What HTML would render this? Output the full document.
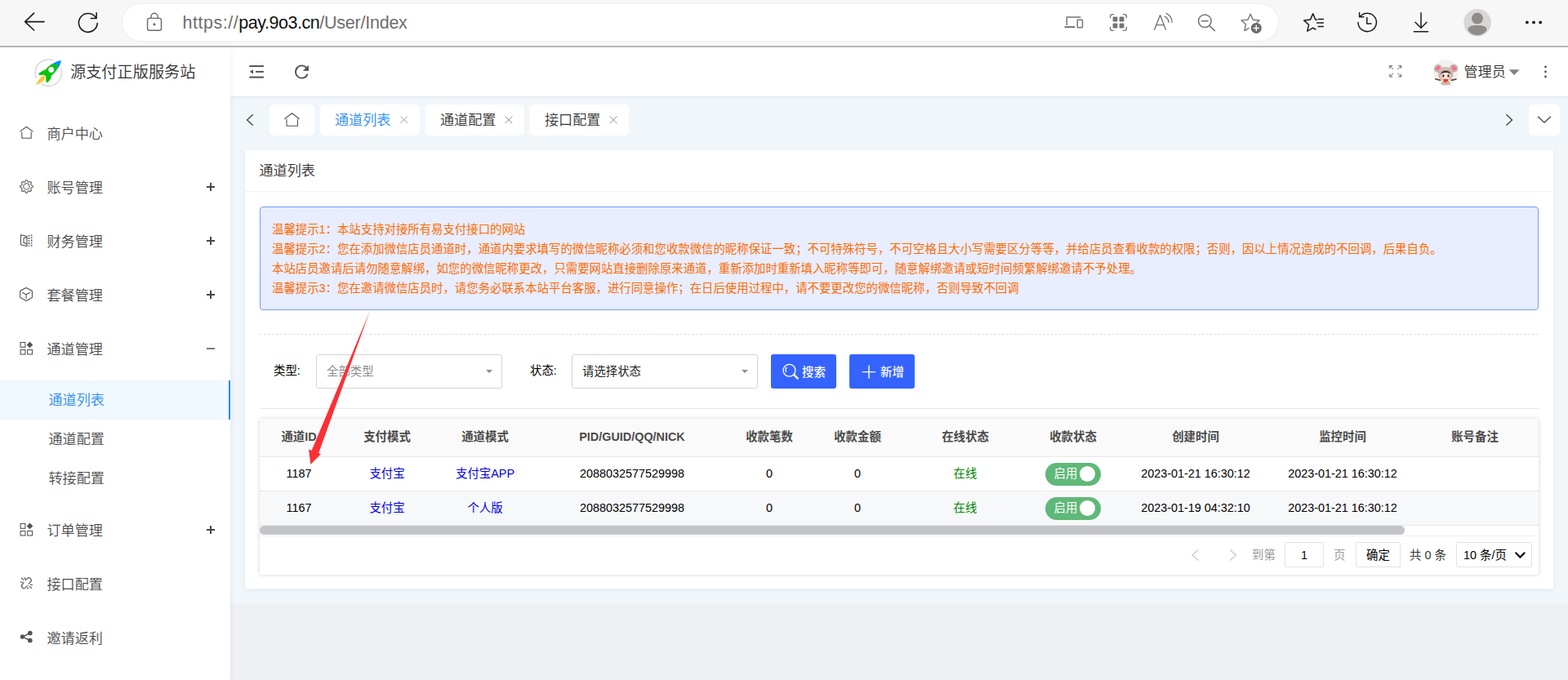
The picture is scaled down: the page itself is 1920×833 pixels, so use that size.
<!DOCTYPE html>
<html lang="zh-CN">
<head>
<meta charset="utf-8">
<title>源支付正版服务站</title>
<style>
*{box-sizing:border-box;margin:0;padding:0}
html,body{width:1920px;height:833px;overflow:hidden;background:#fff}
body{position:relative;font-family:"Liberation Sans","Noto Sans CJK SC",sans-serif;font-size:16.8px;color:#333}
.abs{position:absolute}
svg{display:block;overflow:visible}
/* browser chrome */
#chrome{position:absolute;left:0;top:0;width:1920px;height:58px;background:#f7f7f7;border-bottom:2px solid #bababa}
#urlbar{position:absolute;left:150px;top:5px;width:1415px;height:45px;border-radius:23px;background:#fff;box-shadow:0 0 3px rgba(0,0,0,.08)}
#url{position:absolute;left:223.500px;top:14.800px;font-size:21.500px;line-height:26px;color:#6e6e6e;white-space:nowrap}
#url b{font-weight:normal;color:#111;letter-spacing:-0.45px}
#url i{font-style:normal;letter-spacing:0.52px}
#url u{text-decoration:none;letter-spacing:-0.24px}
/* sidebar */
#side{position:absolute;left:0;top:58px;width:282px;height:775px;background:#fff;box-shadow:1px 0 6px rgba(0,0,0,.06);z-index:3}
#logo{position:absolute;left:86px;top:17px;font-weight:350;font-size:19.200px;line-height:28px;color:#333;white-space:nowrap}
.mi{position:absolute;left:57.500px;font-size:17.100px;line-height:24px;color:#4a4a4a;white-space:nowrap;font-weight:350}
.sub{position:absolute;left:59.500px;font-size:17.100px;line-height:24px;color:#4a4a4a;white-space:nowrap;font-weight:350}
.pm{position:absolute;left:253px;width:10px;height:10px}
.pm:before{content:"";position:absolute;left:0;top:4.3px;width:10px;height:1.4px;background:#484848}
.pm:not(.plus):before{background:#7c7c7c;height:1.8px;top:4px}
.pm.plus:after{content:"";position:absolute;left:4.3px;top:0;width:1.4px;height:10px;background:#484848}
#act{position:absolute;left:0;top:408px;width:282px;height:48px;background:#f0f9ff;border-right:2px solid #2d8cf0}
/* header */
#head{position:absolute;left:282px;top:58px;width:1638px;height:60px;background:#fff;box-shadow:0 1px 4px rgba(0,21,41,.08);z-index:2}
#main{position:absolute;left:282px;top:118px;width:1638px;height:621px;background:#f1f6fa}
#foot{position:absolute;left:282px;top:739px;width:1638px;height:94px;background:#eff0f4}
.tab{position:absolute;top:128px;height:38px;background:#fff;border-radius:5px;font-weight:350;font-size:17.100px;line-height:37px;color:#333;white-space:nowrap}
.tab span{position:absolute;left:18px;top:1px}
.tab i{position:absolute;right:13px;top:13px;width:11px;height:11px}
#card{position:absolute;left:300px;top:184px;width:1602px;height:537px;background:#fff;border-radius:0;box-shadow:0 2px 8px rgba(0,30,80,.05)}
#ctitle{position:absolute;left:17.500px;top:13.500px;font-weight:350;font-size:17.100px;line-height:24px;color:#333}
#cline{position:absolute;left:0;top:50px;width:1602px;height:1px;background:#f4f4f4}
#alert{position:absolute;left:318px;top:253px;width:1566px;height:127px;background:#e8edff;border:1px solid #7b9bf3;border-radius:4px;color:#ff6a00;font-size:14.4px;line-height:24px;padding:15px 0 0 14px;white-space:nowrap}
.dash{position:absolute;left:318px;top:409px;width:1566px;border-top:1px dashed #e2e2e2}
.solid{position:absolute;left:318px;top:500px;width:1566px;border-top:1px solid #e6e6e6}
.lbl{position:absolute;top:443px;font-size:14.4px;line-height:22px;color:#000;white-space:nowrap}
.sel{position:absolute;top:434px;width:228px;height:42px;border:1px solid #d4d4d4;border-radius:3px;background:#fff;font-size:14.4px;line-height:40px;padding-left:12px;white-space:nowrap}
.sel:after{content:"";position:absolute;right:11px;top:17.500px;border:4.200px solid transparent;border-top:4.800px solid #8c8c8c}
.btn{position:absolute;top:434px;width:80px;height:42px;background:#3563ff;border-radius:3px;color:#fff;font-size:14.4px;font-weight:500;line-height:44px;white-space:nowrap}
#tbl{position:absolute;left:318px;top:513px;width:1566px;height:191px;background:#fff;box-shadow:0 0 5px rgba(0,0,0,.18);border-radius:2px}
#thead{position:absolute;left:0;top:0;width:1566px;height:47px;background:#fafafa;border-bottom:1px solid #e8e8e8}
.row{position:absolute;left:0;width:1566px;height:42px;border-bottom:1px dotted #d8d8d8}
.c{position:absolute;top:-1px;height:100%;text-align:center;font-size:14.4px;white-space:nowrap;display:flex;align-items:center;justify-content:center}
#thead .c{font-weight:bold;color:#4a4a4a;font-size:14.4px;top:-3px}
.row .c{color:#000}
.blue{color:#0000e0 !important;top:-2px !important}
.green{color:#008600 !important;top:-2px !important}
.sw{position:relative;top:1px;width:68px;height:28px;border-radius:14px;background:#5fb878;color:#fff;font-size:14.4px;line-height:27px;text-align:left;padding-left:10.500px}
.sw:after{content:"";position:absolute;right:6.800px;top:4.200px;width:19.400px;height:19.400px;border-radius:50%;background:#fff}
#sbar{position:absolute;left:0;top:131px;width:1402px;height:11px;border-radius:6px;background:#c4c5c9}
.pg{position:absolute;font-size:14.4px;line-height:22px;white-space:nowrap;color:#333}
.box{position:absolute;top:151px;height:31px;border:1px solid #e2e2e2;border-radius:2px;background:#fff;font-size:14.4px;line-height:31px;text-align:center;color:#000}
</style>
</head>
<body>
<!-- browser chrome -->
<div id="chrome">
  <div id="urlbar"></div>
  <div id="url"><i>https://</i><b>pay.9o3.cn</b><u>/User/Index</u></div>
</div>

<div id="main"></div>
<div id="foot"></div>

<!-- sidebar -->
<div id="side">
  <div id="logo">源支付正版服务站</div>
  <div class="mi" style="top:94.5px">商户中心</div>
  <div class="mi" style="top:160.5px">账号管理</div><div class="pm plus" style="top:166px"></div>
  <div class="mi" style="top:226.5px">财务管理</div><div class="pm plus" style="top:232px"></div>
  <div class="mi" style="top:292.5px">套餐管理</div><div class="pm plus" style="top:298px"></div>
  <div class="mi" style="top:358.5px">通道管理</div><div class="pm" style="top:364px"></div>
  <div id="act"></div>
  <div class="sub" style="top:420.5px;color:#2d8cf0">通道列表</div>
  <div class="sub" style="top:468.5px">通道配置</div>
  <div class="sub" style="top:516.5px">转接配置</div>
  <div class="mi" style="top:580.5px">订单管理</div><div class="pm plus" style="top:586px"></div>
  <div class="mi" style="top:646.5px">接口配置</div>
  <div class="mi" style="top:712.5px">邀请返利</div>
</div>

<!-- header -->
<div id="head">
  <div class="abs" style="left:1510.500px;top:19px;font-size:17.100px;font-weight:350;line-height:24px;color:#333">管理员</div>
</div>

<!-- tabs -->
<div class="tab" style="left:330px;width:55px"></div>
<div class="tab" style="left:392px;width:122px;color:#2d8cf0"><span>通道列表</span></div>
<div class="tab" style="left:521px;width:121px"><span>通道配置</span></div>
<div class="tab" style="left:649px;width:121px"><span>接口配置</span></div>
<div class="tab" style="left:1872px;width:38px"></div>

<!-- card -->
<div id="card">
  <div id="ctitle">通道列表</div>
  <div id="cline"></div>
</div>
<div id="alert">温馨提示1：本站支持对接所有易支付接口的网站<br>温馨提示2：您在添加微信店员通道时，通道内要求填写的微信昵称必须和您收款微信的昵称保证一致；不可特殊符号，不可空格且大小写需要区分等等，并给店员查看收款的权限；否则，因以上情况造成的不回调，后果自负。<br>本站店员邀请后请勿随意解绑，如您的微信昵称更改，只需要网站直接删除原来通道，重新添加时重新填入昵称等即可，随意解绑邀请或短时间频繁解绑邀请不予处理。<br>温馨提示3：您在邀请微信店员时，请您务必联系本站平台客服，进行同意操作；在日后使用过程中，请不要更改您的微信昵称，否则导致不回调</div>
<div class="dash"></div>
<div class="lbl" style="left:335px">类型:</div>
<div class="sel" style="left:387px;color:#8c8c8c">全部类型</div>
<div class="lbl" style="left:649px">状态:</div>
<div class="sel" style="left:700px;color:#222">请选择状态</div>
<div class="btn" style="left:944px"><span class="abs" style="left:38px">搜索</span></div>
<div class="btn" style="left:1040px"><span class="abs" style="left:38px">新增</span></div>
<div class="solid"></div>

<div id="tbl">
  <div id="thead">
    <div class="c" style="left:0;width:96px">通道ID</div>
    <div class="c" style="left:96px;width:120px">支付模式</div>
    <div class="c" style="left:216px;width:120px">通道模式</div>
    <div class="c" style="left:336px;width:240px;top:-1.500px">PID/GUID/QQ/NICK</div>
    <div class="c" style="left:576px;width:96px">收款笔数</div>
    <div class="c" style="left:672px;width:120px">收款金额</div>
    <div class="c" style="left:792px;width:144px">在线状态</div>
    <div class="c" style="left:936px;width:120px">收款状态</div>
    <div class="c" style="left:1056px;width:180px">创建时间</div>
    <div class="c" style="left:1236px;width:180px">监控时间</div>
    <div class="c" style="left:1416px;width:144px">账号备注</div>
  </div>
  <div class="row" style="top:47px">
    <div class="c" style="left:0;width:96px">1187</div>
    <div class="c blue" style="left:96px;width:120px">支付宝</div>
    <div class="c blue" style="left:216px;width:120px">支付宝APP</div>
    <div class="c" style="left:336px;width:240px">2088032577529998</div>
    <div class="c" style="left:576px;width:96px">0</div>
    <div class="c" style="left:672px;width:120px">0</div>
    <div class="c green" style="left:792px;width:144px">在线</div>
    <div class="c" style="left:936px;width:120px"><div class="sw">启用</div></div>
    <div class="c" style="left:1056px;width:180px">2023-01-21 16:30:12</div>
    <div class="c" style="left:1236px;width:180px">2023-01-21 16:30:12</div>
  </div>
  <div class="row" style="top:89px;background:#f7f8fa">
    <div class="c" style="left:0;width:96px">1167</div>
    <div class="c blue" style="left:96px;width:120px">支付宝</div>
    <div class="c blue" style="left:216px;width:120px">个人版</div>
    <div class="c" style="left:336px;width:240px">2088032577529998</div>
    <div class="c" style="left:576px;width:96px">0</div>
    <div class="c" style="left:672px;width:120px">0</div>
    <div class="c green" style="left:792px;width:144px">在线</div>
    <div class="c" style="left:936px;width:120px"><div class="sw">启用</div></div>
    <div class="c" style="left:1056px;width:180px">2023-01-19 04:32:10</div>
    <div class="c" style="left:1236px;width:180px">2023-01-21 16:30:12</div>
  </div>
  <div id="sbar"></div>
  <div class="abs" style="left:0;top:142.500px;width:1566px;height:1px;background:#efefef"></div>
  <div class="pg" style="left:1215px;top:156px;color:#9a9a9a">到第</div>
  <div class="box" style="left:1255px;width:48px">1</div>
  <div class="pg" style="left:1315px;top:156px;color:#9a9a9a">页</div>
  <div class="box" style="left:1342px;width:55px">确定</div>
  <div class="pg" style="left:1408px;top:156px">共 0 条</div>
  <div class="box" style="left:1465px;width:93px;text-align:left;padding-left:8px">10 条/页</div>
</div>

<!-- icon overlay -->
<svg id="ov" width="1920" height="833" viewBox="0 0 1920 833" style="position:absolute;left:0;top:0;z-index:10;pointer-events:none" fill="none" stroke-linecap="round" stroke-linejoin="round">
<!-- browser icons -->
<g stroke="#1b1b1b" stroke-width="1.6">
  <path d="M54 26.6H30.6M41.6 16.2L30.6 26.6L41.6 37"/>
  <path d="M119.2 28.6A11.4 11.4 0 1 1 117.6 22"/>
  <path d="M118.1 15.7V22.5H111.3"/>
</g>
<g stroke="#6a6a6a" stroke-width="1.4">
  <rect x="180.6" y="22.4" width="16.9" height="14.8" rx="2.2"/>
  <path d="M185 22.2V20.4a4.1 4.1 0 0 1 8.2 0V22.2"/>
  <circle cx="189" cy="29.8" r="0.9" fill="#6a6a6a"/>
</g>
<g stroke="#747474" stroke-width="1.5">
  <path d="M1306.300 31V20.900H1323.400" stroke-linecap="butt"/>
  <path d="M1303.500 33.100H1316.200" stroke-width="2" stroke-linecap="butt"/>
  <rect x="1319.300" y="24.200" width="6.200" height="9.600" rx="0.800"/>
</g>
<g stroke="#747474" stroke-width="1.4">
  <path d="M1363.6 17.6H1362a2.4 2.4 0 0 0-2.4 2.4V21.6M1375.4 17.6H1377a2.4 2.4 0 0 1 2.4 2.4V21.6M1363.6 37.4H1362a2.4 2.4 0 0 1-2.4-2.4V33.4M1375.4 37.4H1377a2.4 2.4 0 0 0 2.4-2.4V33.4"/>
  <g fill="#747474" stroke="none">
    <rect x="1362.6" y="20.6" width="5.8" height="5.8" rx="1.2"/><rect x="1370.6" y="20.6" width="5.8" height="5.8" rx="1.2"/>
    <rect x="1362.6" y="28.6" width="5.8" height="5.8" rx="1.2"/><rect x="1370.6" y="28.6" width="5.8" height="5.8" rx="1.2"/>
  </g>
</g>
<g stroke="#747474" stroke-width="1.4">
  <path d="M1413.6 36.2L1420.6 18.6L1427.4 36.2M1415.8 30.6H1425.2"/>
  <path d="M1426.4 20.4a8 8 0 0 1 4.6 6.8M1428.2 16.4a12.4 12.4 0 0 1 7 10.6"/>
</g>
<g stroke="#747474" stroke-width="1.5">
  <circle cx="1475.3" cy="25.8" r="7.8"/>
  <path d="M1471.4 25.8H1479.2M1481 31.6L1487.4 37.6"/>
</g>
<g stroke="#747474" stroke-width="1.4">
  <path d="M1531.2 17.2L1534.3 24.2L1542.2 25L1539 27.8M1529 34.6L1524 37.6L1525.4 29.8L1520 24.9L1528 24.2L1531.2 17.2"/>
  <circle cx="1538.3" cy="34.4" r="6.5" fill="#6b6b6b" stroke="none"/>
  <path d="M1535.2 34.4H1541.4M1538.3 31.3V37.5" stroke="#fff" stroke-width="1.5"/>
</g>
<g stroke="#1b1b1b" stroke-width="1.5">
  <path d="M1612.400 24.300L1610.900 24.100L1607.700 16.800L1604.500 24.100L1596.600 24.900L1602.500 30.300L1600.800 38.200L1607.700 34.100L1610.800 36" stroke-linejoin="round"/>
  <path d="M1614.200 23.500H1620.400M1612.600 27.900H1620.400M1614.200 32.400H1620.400"/>
  <path d="M1665.6 20.2A11.2 11.2 0 1 1 1663 27.4M1664.6 15.6V20.8H1669.8M1673.8 21.6V29H1679"/>
  <path d="M1740 15.8V34M1733 27.2L1740 34.2L1747 27.2M1731.4 38.8H1748.6"/>
</g>
<circle cx="1809" cy="27.8" r="16.8" fill="#d9d7d5"/>
<circle cx="1809" cy="22.6" r="7" fill="#908c89"/>
<path d="M1797.4 36.6c0-4 4-5.6 11.6-5.6s11.600 1.600 11.600 5.600c-2 4-6.400 6.600-11.600 6.600s-9.600-2.600-11.600-6.600z" fill="#908c89"/>
<g fill="#1b1b1b"><circle cx="1869.9" cy="27.4" r="1.9"/><circle cx="1878" cy="27.4" r="1.9"/><circle cx="1886.2" cy="27.4" r="1.9"/></g>

<!-- logo -->
<path d="M44.41 95.83A16.3 16.3 0 0 1 65.14 73.98M74.52 83.36A16.3 16.3 0 0 1 50.66 103.02" stroke="#d2d2d2" stroke-width="1.3" stroke-linecap="butt"/>
<g transform="translate(30 66) scale(0.054)">
  <path d="M610 240C690 180 760 150 828 146C828 215 795 285 740 345L735 240Z" fill="#0e90ff"/>
  <path d="M612 238L738 238L742 342C715 395 665 450 612 490C608 545 580 610 515 652C490 640 480 620 482 598C490 565 492 530 478 498L430 470C400 482 350 485 322 472C315 462 318 450 330 440C370 405 420 370 485 350C520 305 565 265 612 238Z" fill="#0ac40a"/>
  <circle cx="605" cy="360" r="62" fill="#fff"/>
  <path d="M258 704C300 620 350 540 412 505C445 492 478 510 472 545C455 600 390 655 258 704Z" fill="#ffc62e"/>
</g>

<!-- sidebar icons -->
<g stroke="#555" stroke-width="1.1" stroke-linecap="butt" stroke-linejoin="miter">
  <path d="M24.2 161.4L32.4 155.2L40.6 161.4M26.8 161.6V169.3H38.2V161.6"/>
  <!-- gear -->
  <g transform="translate(32.4 228.4) scale(0.93) translate(-32.4 -228.4)">
  <circle cx="32.4" cy="228.4" r="3.9"/>
  <path id="gear" d="M31.200 220.200h2.400l0.500 2.100l1.500 0.600l1.800-1.100l1.700 1.700l-1.100 1.800l0.600 1.500l2.100 0.500v2.400l-2.100 0.500l-0.600 1.500l1.100 1.800l-1.700 1.700l-1.800-1.100l-1.500 0.600l-0.500 2.100h-2.400l-0.500-2.100l-1.500-0.600l-1.800 1.100l-1.700-1.700l1.100-1.800l-0.600-1.500l-2.100-0.500v-2.400l2.100-0.500l0.600-1.500l-1.100-1.800l1.700-1.700l1.800 1.100l1.500-0.600z" stroke-linejoin="round"/></g>
  <!-- finance -->
  <path d="M25.500 287.600V299.800L33 301.600V289.400ZM29 291.600V297.600L33 298.600M33 290.600L29 291.600"/>
  <path d="M35.500 288v13.500M38.600 287.400v14" stroke-dasharray="1.600 1.500" stroke-width="1.700"/>
  <!-- cube -->
  <path d="M32.100 352.400L39.400 356.400V364.500L32.100 368.500L24.700 364.500V356.400ZM27.200 358.300L32.100 360.800L36.900 358.300M32.100 360.800V365.800"/>
  <!-- channel mgmt -->
  <rect x="25.100" y="419.500" width="5.800" height="5.800"/><rect x="25.100" y="428.500" width="5.800" height="5.500"/><rect x="33.700" y="428.500" width="5.800" height="5.500"/>
  <path d="M36.500 418.600L40.300 422.400L36.500 426.200L32.700 422.400Z" fill="#555" stroke="none"/>
  <!-- order mgmt -->
  <rect x="25.100" y="641.500" width="5.800" height="5.800"/><rect x="25.100" y="650.500" width="5.800" height="5.500"/><rect x="33.700" y="650.500" width="5.800" height="5.500"/>
  <path d="M36.500 640.600L40.300 644.400L36.500 648.200L32.700 644.400Z" fill="#555" stroke="none"/>
</g>
<!-- link icon -->
<g stroke="#666" stroke-width="1.300" stroke-linecap="round">
  <path d="M31.200 710.600L33.400 708.800a2.800 2.800 0 0 1 4.200 3.700L35.300 715.200M33.400 717.600L31.400 719.600a2.800 2.800 0 0 1-4.300-3.600L29.200 713.400"/>
  <path d="M26.300 708.200L28.600 710.200M30.600 707.600V709.400M25.200 713.200H27.200M36.200 718.200L38.700 720.400M34 719.600V721.400M37.400 716.400H39.400"/>
</g>
<!-- share -->
<g fill="#555" stroke="#555" stroke-width="1.5">
  <circle cx="27.5" cy="780.1" r="2"/><circle cx="36.8" cy="775.5" r="2.1"/><circle cx="36.8" cy="784.5" r="2.1"/>
  <path d="M36.8 775.5L27.5 780.1L36.8 784.5" fill="none"/>
</g>

<!-- header icons -->
<g fill="#4f4f4f">
  <rect x="305.300" y="80.100" width="17.600" height="1.900"/><rect x="313" y="86.900" width="9.900" height="1.900"/><rect x="305.300" y="93.600" width="17.600" height="2"/>
  <path d="M305.800 87.800L310 85.200V90.400Z"/>
</g>
<path d="M377 86.400A7.600 7.600 0 1 0 376.700 90.600" stroke="#4f4f4f" stroke-width="1.800" stroke-linecap="butt"/>
<path d="M377.900 79.800V86.700H370.800Z" fill="#4f4f4f"/>
<g stroke="#606060" stroke-width="1" stroke-linecap="butt" stroke-linejoin="miter">
  <path d="M1706.200 85L1701.800 80.600M1701.800 84V80.600H1705.200M1711.300 85L1715.700 80.600M1712.300 80.600H1715.700V84M1706.200 89.600L1701.800 94M1701.800 90.600V94H1705.200M1711.300 89.600L1715.700 94M1712.300 94H1715.700V90.600"/>
</g>
<path d="M1847.600 85.200H1860.600L1854.100 92Z" fill="#7f7f7f"/>
<g fill="#555"><circle cx="1892.500" cy="82" r="1.400"/><circle cx="1892.500" cy="87.900" r="1.400"/><circle cx="1892.500" cy="93.900" r="1.400"/></g>

<!-- avatar -->
<g>
  <circle cx="1770.3" cy="88.5" r="15.6" fill="#f2f1f0"/>
  <circle cx="1760.9" cy="84" r="5" fill="#c9b2a8"/><circle cx="1780.2" cy="83.8" r="5" fill="#c9b2a8"/>
  <path d="M1760.6 86.6l-2.300-1.500a1.700 1.700 0 0 1 1.700-2.800a1.700 1.700 0 0 1 3.100-0.900c0.500 1.700-0.700 3.500-2.500 5.200z" fill="#f96a93"/>
  <path d="M1780.6 86.500l2.300-1.500a1.700 1.700 0 0 0-1.700-2.800a1.700 1.700 0 0 0-3.100-0.900c-0.500 1.700 0.700 3.500 2.500 5.200z" fill="#f96a93"/>
  <path d="M1761.200 93c-0.800-6.500 3.200-11 9-11s9.800 4.500 9 11c-0.500 3.600-3.400 5.400-9 5.400s-8.500-1.800-9-5.400z" fill="#cdb8ae"/>
  <path d="M1768.900 84.600l1.400-1.700l1.400 1.700z" fill="#fff"/>
  <circle cx="1770.300" cy="83.600" r="0.600" fill="#f58aa0"/>
  <path d="M1764.300 96c-0.700-4.500 2-7.500 6-7.500s6.700 3 6 7.500c-1.500 1.500-10.500 1.500-12 0z" fill="#f6e7e2"/>
  <path d="M1764 91c0.800-3.200 3.200-4.600 6.300-4.600s5.500 1.400 6.300 4.600c-2-1.500-4-2-6.300-2s-4.300 0.500-6.300 2z" fill="#4e3328"/>
  <ellipse cx="1767.300" cy="92.800" rx="1.100" ry="1.600" fill="#24120e"/><ellipse cx="1773.500" cy="92.800" rx="1.100" ry="1.600" fill="#24120e"/>
  <circle cx="1765.800" cy="94.900" r="1.300" fill="#f5a88f"/><circle cx="1774.900" cy="94.900" r="1.300" fill="#f5a88f"/>
  <path d="M1757.800 96.800l5.800 1.500M1783 97l-5.800 1.300" stroke="#5a3a30" stroke-width="1.600"/>
  <path d="M1764.600 104c0-3.600 1.800-6.200 5.700-6.200s5.700 2.600 5.700 6.200c-3.800 0.400-7.600 0.400-11.400 0z" fill="#cbb5aa"/>
  <path d="M1770.200 101.600l-2.700-2.700a1.500 1.500 0 0 1 2.700-1.400a1.500 1.500 0 0 1 2.700 1.400z" fill="#ee3a1a"/>
</g>

<!-- tab icons -->
<g stroke="#444" stroke-width="1.35" stroke-linecap="butt" stroke-linejoin="miter">
  <path d="M309.800 140.200L302.600 146.900L309.800 153.600"/>
  <path stroke-width="1.1" stroke="#505050" d="M348.300 145.700L357.500 138.700L366.700 145.700M351 145.700V154.300H364.400V145.700"/>
  <path d="M1844.400 140.200L1851.600 146.900L1844.400 153.600"/>
  <path d="M1883.100 142.800L1891 150.200L1898.900 142.800"/>
</g>
<g stroke="#8fa0b8" stroke-width="1" stroke-linecap="butt">
  <path d="M490.200 142.400L498.800 151M498.800 142.400L490.200 151"/>
</g>
<g stroke="#8a8a8a" stroke-width="1" stroke-linecap="butt">
  <path d="M618.600 142.400L627.200 151M627.200 142.400L618.600 151M746.800 142.400L755.400 151M755.400 142.400L746.800 151"/>
</g>

<!-- button icons -->
<g stroke="#fff" stroke-width="1.300">
  <circle cx="966.500" cy="453.700" r="7.400"/>
  <path d="M963.200 450.400a4.600 4.600 0 0 0-0.600 5"/>
  <path d="M972.200 459.200L976.800 463.600" stroke-width="2.400"/>
  <path d="M1055.800 455.600H1072.200M1064 447.400V463.800" stroke-linecap="butt" stroke-width="1.400"/>
</g>

<!-- pagination arrows -->
<g stroke="#c8c8c8" stroke-width="1.300" stroke-linecap="butt" stroke-linejoin="miter">
  <path d="M1467.300 673.600L1460 680.100L1467.300 686.600"/>
  <path d="M1506.200 673.600L1513.500 680.100L1506.200 686.600"/>
</g>
<path d="M1855.600 676.800L1861.400 682.600L1867.200 676.800" stroke="#111" stroke-width="2.2" stroke-linecap="butt" stroke-linejoin="miter"/>

<!-- red arrow -->
<path d="M452.900 381L381.600 552.100L378 550.300L380.300 568.900L392.900 556.300L390.200 555Z" fill="#fb3035"/>
</svg>
</body>
</html>
